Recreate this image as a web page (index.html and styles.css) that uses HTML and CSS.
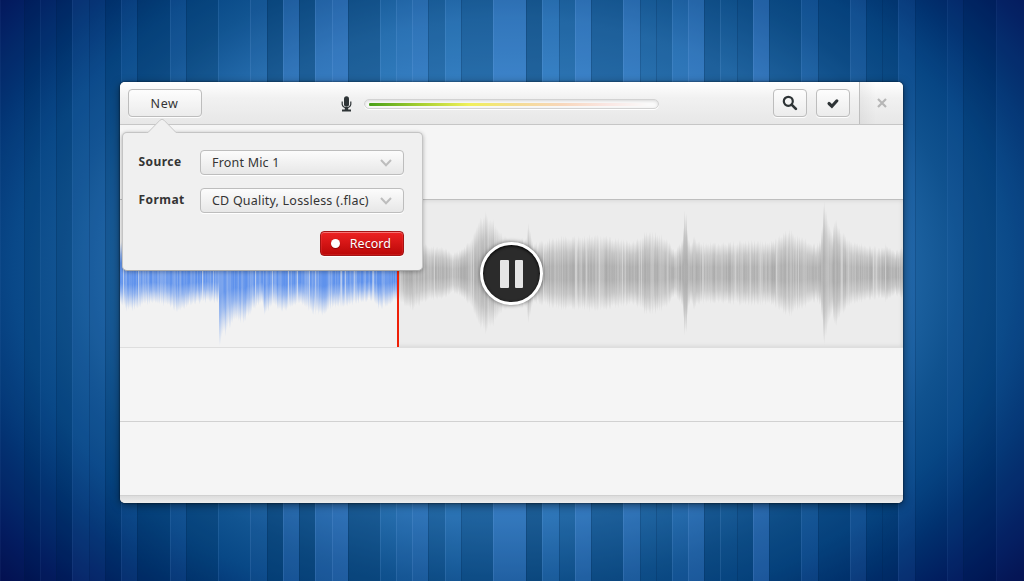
FILE: index.html
```html
<!DOCTYPE html>
<html lang="en">
<head>
<meta charset="utf-8">
<title>Sound Recorder</title>
<link rel="stylesheet" href="styles.css">
</head>
<body>
<div class="desktop">
  <svg class="stripes" id="stripes" width="1024" height="581" aria-hidden="true"></svg>
  <main class="window">
    <header class="toolbar">
      <div class="toolbar-start"><button class="btn btn-new">New</button></div>
      <div class="level">
        <svg class="mic" width="12" height="16" viewBox="0 0 12 16"><rect x="3" y="0.300" width="5" height="10.400" rx="2.500" fill="#2e3436"/><path d="M1.200 5.500v2.800a4.400 4.200 0 0 0 8.600 0V5.500" fill="none" stroke="#2e3436" stroke-width="1.200"/><path d="M3.800 11.800h3.400v1.700h2.800v1.900h-9v-1.900h2.800z" fill="#2e3436"/></svg>
        <div class="meter"><div class="meter-fill"></div></div>
      </div>
      <div class="toolbar-end">
        <button class="btn btn-icon" aria-label="Search"><svg width="16" height="16" viewBox="0 0 16 16"><circle cx="6.300" cy="6.300" r="4.500" fill="none" stroke="#2e3436" stroke-width="2.200"/><path d="M9.600 9.600l4.300 4.300" stroke="#2e3436" stroke-width="2.700" stroke-linecap="round"/></svg></button>
        <button class="btn btn-icon" aria-label="Done"><svg width="16" height="16" viewBox="0 0 16 16"><path d="M4 8.500l2.900 2.700 5-5.400" fill="none" stroke="#2e3436" stroke-width="3.100" stroke-linecap="round"/></svg></button>
      </div>
      <button class="close" aria-label="Close"><svg width="10" height="10" viewBox="0 0 10 10"><path d="M1 1l8 8M9 1L1 9" stroke="#b6b6b6" stroke-width="2.200"/></svg></button>
    </header>
    <section class="row row-first"></section>
    <section class="row row-wave">
      <svg class="wave" id="wave" width="783" height="147" aria-label="Waveform">
        <defs>
          <linearGradient id="blue" x1="0" y1="0" x2="0" y2="1"><stop offset="0" stop-color="#7da3e8" stop-opacity="0"/><stop offset=".2" stop-color="#5f92ec" stop-opacity=".65"/><stop offset=".34" stop-color="#5f92ec"/><stop offset=".66" stop-color="#5f92ec"/><stop offset=".8" stop-color="#5f92ec" stop-opacity=".65"/><stop offset="1" stop-color="#7da3e8" stop-opacity="0"/></linearGradient>
          <linearGradient id="gray" x1="0" y1="0" x2="0" y2="1"><stop offset="0" stop-color="#a4a4a4" stop-opacity="0"/><stop offset=".2" stop-color="#a4a4a4" stop-opacity=".6"/><stop offset=".4" stop-color="#a4a4a4" stop-opacity=".92"/><stop offset=".6" stop-color="#a4a4a4" stop-opacity=".92"/><stop offset=".8" stop-color="#a4a4a4" stop-opacity=".6"/><stop offset="1" stop-color="#a4a4a4" stop-opacity="0"/></linearGradient>
        </defs>
        <rect width="278" height="147" fill="#f2f2f2"/>
      </svg>
      <button class="pause" aria-label="Pause"><span class="bar"></span><span class="bar"></span></button>
    </section>
    <section class="row row-plain"></section>
    <section class="row row-plain"></section>
    <footer class="statusbar"></footer>

    <div class="popover">
      <svg class="arrow" width="32" height="16" viewBox="0 0 32 16"><path d="M0 15.500H2L14 3.200Q16 1.200 18 3.200L30 15.500H32V16H0z" fill="#f0f0f0"/><path d="M0 15.500H2L14 3.200Q16 1.200 18 3.200L30 15.500H32" fill="none" stroke="#c8c8c8"/></svg>
      <div class="field"><span class="label">Source</span><button class="select"><span class="value">Front Mic 1</span><svg width="12" height="8" viewBox="0 0 12 8"><path d="M1 1l5 5.300L11 1" fill="none" stroke="#bdbdbd" stroke-width="2"/></svg></button></div>
      <div class="field"><span class="label">Format</span><button class="select"><span class="value">CD Quality, Lossless (.flac)</span><svg width="12" height="8" viewBox="0 0 12 8"><path d="M1 1l5 5.300L11 1" fill="none" stroke="#bdbdbd" stroke-width="2"/></svg></button></div>
      <button class="record"><span class="dot"></span>Record</button>
    </div>
  </main>
</div>
<script src="script.js"></script>
</body>
</html>
```
FILE: styles.css
```css
* { box-sizing: border-box; }
body { margin: 0; overflow: hidden; font-family: "Noto Sans", "Open Sans", sans-serif; font-size: 12.5px; color: #343434; }
button { font: inherit; color: inherit; padding: 0; margin: 0; border: 0; background: none; }
svg { display: block; flex: none; }
.desktop {
  position: relative; width: 1024px; height: 581px; padding: 82px 121px 78px 120px;
  background: radial-gradient(640px 450px at 512px 270px, #4290d0 0%, #3480c2 40%, #276faf 56%, #10528f 70%, #074684 78%, #002e6c 88%, #00185a 98%, #000744 108%);
}
.stripes { position: absolute; left: 0; top: 0; }
.window {
  position: relative; width: 783px; height: 421px; display: flex; flex-direction: column;
  background: #f5f5f5; border-radius: 5px; box-shadow: 0 0 2px rgba(0,0,0,.75), 0 2px 9px rgba(0,0,0,.5);
}
.toolbar {
  height: 43px; display: flex; align-items: stretch; border-bottom: 1px solid #c6c6c6;
  border-radius: 5px 5px 0 0; background: linear-gradient(#fff, #f1f1f1 38%, #e7e7e7);
}
.toolbar-start { width: 221px; padding: 7px 8px; }
.btn {
  height: 28px; display: flex; align-items: center; justify-content: center;
  border: 1px solid #bdbdbd; border-radius: 4px; background: linear-gradient(#fdfdfd, #ececec);
  box-shadow: 0 1px 0 rgba(255,255,255,.9);
}
.btn-new { width: 74px; letter-spacing: .6px; padding: 0 1px 0 0; }
.level { flex: 1; display: flex; align-items: center; gap: 11px; }
.mic { margin-top: 1px; }
.meter {
  width: 295px; height: 10px; margin-top: 2px; padding: 3px 4px; border: 1px solid #d2d2d2; border-radius: 5px;
  background: #f9f9f9; box-shadow: inset 0 1px 3px rgba(0,0,0,.13), 0 1px 0 #fff;
}
.meter-fill { height: 3px; border-radius: 1px; background: linear-gradient(90deg, #49a01a 0%, #a6cf30 18%, #f0f05a 35%, #f5dc94 52%, #f8d7bc 68%, #fae6e2 83%, #fafafa 98%); }
.toolbar-end { display: flex; gap: 9px; padding: 7px 9px 7px 0; }
.btn-icon { width: 34px; }
.close { width: 44px; display: flex; align-items: center; justify-content: center; border-left: 1px solid #bebebe; background: linear-gradient(90deg, rgba(0,0,0,.045), transparent 16px); border-radius: 0 5px 0 0; }
.close svg { margin-left: 1px; }
.row { border-bottom: 1px solid #d1d1d1; }
.row-first { height: 75px; border-bottom-color: #bebebe; }
.row-wave { height: 148px; position: relative; background: #ececec; box-shadow: inset 0 0 5px rgba(0,0,0,.12); border-bottom-color: #dedede; }
.pause {
  position: absolute; left: 360px; top: 42px; width: 63px; height: 63px; border: 3px solid #fff; border-radius: 50%;
  background: #2b2b2b; box-shadow: 0 0 4px rgba(0,0,0,.55), inset 0 1px 3px #000;
  display: flex; align-items: center; justify-content: center; gap: 6px;
}
.bar { width: 8.500px; height: 28px; border-radius: 1px; background: #e5e5e5; }
.row-plain { height: 74px; }
.statusbar { flex: 1; border-radius: 0 0 5px 5px; background: linear-gradient(#dcdcdc, #eee); }
.popover {
  position: absolute; left: 2px; top: 50px; width: 301px; height: 139px; padding: 17px 18px 0 15.500px;
  display: flex; flex-direction: column; gap: 13px; background: #f0f0f0; border: 1px solid #c4c4c4; border-bottom-color: #aaa;
  border-radius: 5px; box-shadow: 0 1px 4px rgba(0,0,0,.3);
}
.arrow { position: absolute; left: 23px; top: -16px; }
.field { display: flex; align-items: center; justify-content: space-between; }
.label { font-weight: 700; font-size: 12px; letter-spacing: .45px; padding-bottom: 2px; }
.select {
  width: 204px; height: 25px; padding: 0 11px; display: flex; align-items: center; justify-content: space-between;
  border: 1px solid #bdbdbd; border-radius: 4px; background: linear-gradient(#fcfcfc, #e7e7e7); box-shadow: 0 1px 0 #fff; white-space: nowrap;
}
.value { letter-spacing: .2px; }
.record {
  align-self: flex-end; width: 84px; height: 25px; margin-top: 5px; padding: 0 12px 0 10px; display: flex; align-items: center; justify-content: space-between;
  color: #fff; letter-spacing: .05px; border: 1px solid #a41414; border-radius: 4px; background: linear-gradient(#ee2222, #ba0808);
  box-shadow: inset 0 1px 0 rgba(255,255,255,.35), inset 0 0 0 1px rgba(255,90,90,.2), 0 1px 0 #fff; text-shadow: 0 1px 1px rgba(80,0,0,.5);
}
.dot { width: 9px; height: 9px; border-radius: 50%; background: #fff; box-shadow: 0 1px 1px rgba(80,0,0,.5); }
```
FILE: script.js
```javascript
const NS = "http://www.w3.org/2000/svg";
function rect(parent, x, y, w, h, fill, opacity) {
  const r = document.createElementNS(NS, "rect");
  const attrs = { x, y, width: w, height: h, fill, opacity };
  for (const k in attrs) r.setAttribute(k, attrs[k]);
  parent.appendChild(r);
}

// Wallpaper stripes: [left edge, brightness]
const bands = [
  [0,.5],[24,-.7],[40,.4],[56,-.6],[72,.9],[89,.6],[105,-.6],[121,.7],[137,-.8],[170,.4],[186,-.6],
  [218,.1],[250,.3],[267,-.8],[283,.6],[299,-.7],[315,.6],[332,.8],[348,-.7],[380,0],[396,.3],
  [412,.5],[428,-.4],[445,.2],[461,-.5],[493,.7],[526,-.8],[542,.4],[559,-.3],[575,.7],[591,-.6],
  [623,.6],[640,-.3],[656,-.4],[672,.3],[688,.7],[704,-.6],[720,-.3],[737,-.5],[753,.9],[769,-.5],
  [801,.4],[818,-.6],[850,.6],[866,-.4],[882,-.6],[898,.8],[915,.1],[947,.5],[963,-.9],[996,.8],[1024,0]
];
const stripes = document.getElementById("stripes");
for (let i = 0; i < bands.length - 1; i++) {
  const [x, v] = bands[i], w = bands[i + 1][0] - x;
  const centre = 1 - Math.abs(x + w / 2 - 512) / 512;
  const strength = .35 + .65 * Math.min(1, centre * 1.8);
  const light = centre < .3 ? "#3f7cd0" : "#6a9cf4";
  rect(stripes, x, 0, w, 581, v > 0 ? light : "#00305a", (v > 0 ? v * .26 : -v * .42) * strength);
  const prev = i ? bands[i - 1][1] : 0;
  rect(stripes, x, 0, 1, 581, v > prev ? "#9cc8ff" : "#001c44", v > prev ? .13 * strength : .18);
}

// Amplitude envelope: [x in window, half height]
const env = [[0,34],[3,36],[8,40],[20,34],[35,30],[50,36],[59,41],[66,34],[85,30],[98,30],[99,76],[103,66],[108,58],[116,48],[123,52],[132,38],[142,31],[144,42],[155,33],[161,42],[170,34],[180,32],[190,41],[202,43],[210,36],[225,34],[240,30],[252,28],[259,37],[277,29],[282,32],[290,37],[293,38],[300,32],[310,27],[322,28],[332,20],[342,24],[350,34],[356,48],[360,55],[365,61],[370,58],[375,50],[380,43],[390,33],[405,36],[408,49],[413,30],[430,35],[440,38],[455,37],[470,39],[480,38],[495,36],[505,33],[523,35],[524,43],[532,42],[545,37],[550,29],[555,24],[560,30],[562,33],[564,62],[566,60],[568,36],[570,28],[573,37],[580,31],[600,31],[625,33],[650,32],[658,36],[664,43],[670,44],[675,38],[685,35],[695,29],[700,33],[702,54],[703,75],[704,76],[706,63],[708,52],[712,38],[714,56],[720,46],[725,38],[735,31],[750,28],[764,25],[765,31],[775,22],[783,28]];
let seed = 29;
function rand() { seed = (seed * 16807) % 2147483647; return seed / 2147483647; }
const wave = document.getElementById("wave");
let k = 0;
let tone = .85;
for (let x = 0; x < 783; x++) {
  while (k < env.length - 2 && env[k + 1][0] <= x) k++;
  const [x0, a] = env[k], [x1, b] = env[k + 1];
  const peak = a + (b - a) * (x - x0) / (x1 - x0);
  const h = Math.max(4, Math.min(73, peak * (.88 + rand() * .14)));
  const played = x < 278;
  // Tone drifts from bar to bar, with an occasional pale gap.
  tone = tone * .35 + (.55 + rand() * .45) * .65;
  const gap = rand() < (peak > 45 ? 0 : .08);
  const o = gap ? .4 + rand() * .2 : Math.min(1, tone + (played ? .12 : .04));
  rect(wave, x, 73 - h, 1, h * 2, played ? "url(#blue)" : "url(#gray)", o);
}
rect(wave, 277, 0, 2, 147, "#ef2007", 1);
```
